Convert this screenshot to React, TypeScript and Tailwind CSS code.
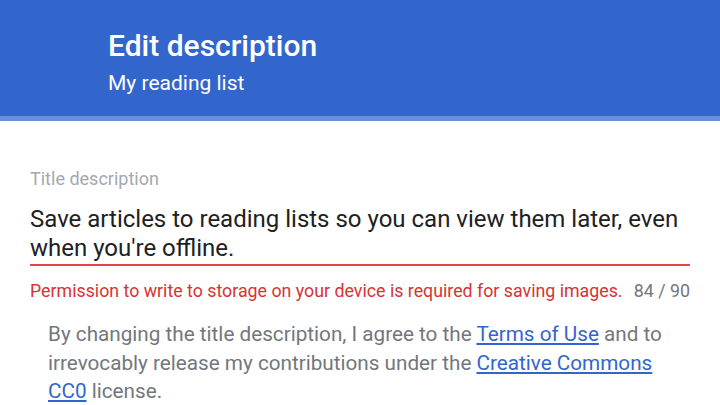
export default function App() {
  return (
    <div className="w-[720px] h-[405px] overflow-hidden bg-white font-['Roboto',sans-serif]">
      <div className="h-[116px] bg-[#3366cc] pl-[108px] pt-[28px] text-white">
        <h1 className="text-[30px] leading-[36px] font-medium">Edit description</h1>
        <p className="text-[21px] leading-[28px] mt-[5px]">My reading list</p>
      </div>
      <div className="h-[5px] bg-[#6b8fd8]" />

      <div className="px-[30px] pt-[47px]">
        <label className="block text-[18px] leading-[22px] text-[#a2a9b1]">Title description</label>
        <div className="mt-[15px] text-[24px] leading-[29px] text-[#202122] pb-[1px] border-b-2 border-[#e54448]">
          Save articles to reading lists so you can view them later, even when you're offline.
        </div>
        <div className="flex justify-between items-baseline gap-2 mt-[14px] text-[17.8px] leading-[22px]">
          <span className="text-[#d73333] whitespace-nowrap">
            Permission to write to storage on your device is required for saving images.
          </span>
          <span className="text-[#72777d] whitespace-nowrap">84 / 90</span>
        </div>
        <p className="pl-[18px] mt-[18px] text-[20.7px] leading-[28.5px] text-[#72777d]">
          By changing the title description, I agree to the{' '}
          <a className="text-[#3366cc] underline">Terms of Use</a> and to irrevocably release my
          contributions under the <a className="text-[#3366cc] underline">Creative Commons CC0</a>{' '}
          license.
        </p>
      </div>
    </div>
  )
}
